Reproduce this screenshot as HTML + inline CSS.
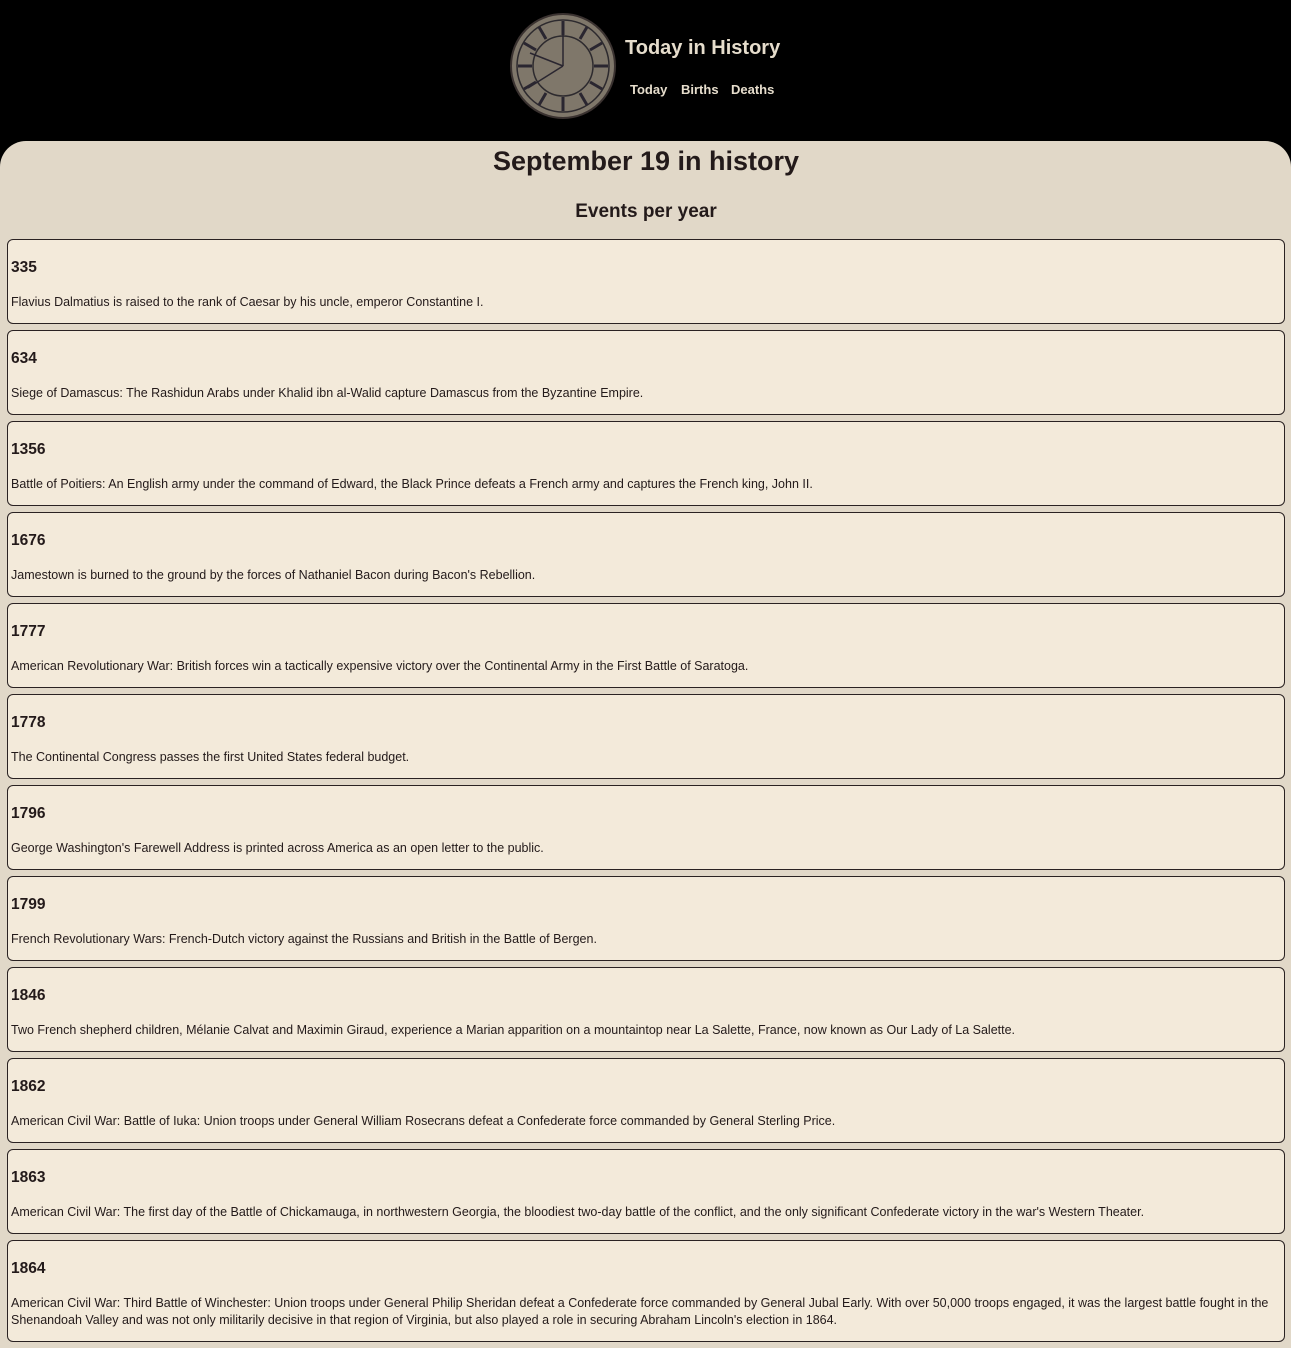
<!DOCTYPE html>
<html><head><meta charset="utf-8"><style>
*{box-sizing:border-box}
body{margin:0;background:#000;font-family:"Liberation Sans",sans-serif;color:#231a1a;width:1291px;height:1348px;overflow:hidden}
header{height:141px;position:relative}
.clock{position:absolute;left:510px;top:13px;width:106px;height:106px}
.ttl{position:absolute;left:625px;top:37px;font-size:20px;font-weight:bold;color:#e6ddcc;white-space:nowrap}
.nav{position:absolute;top:82px;font-size:13px;font-weight:bold;color:#e6ddcc}
main{background:#e1d8c8;border-radius:26px 26px 0 0;height:1207px;padding:0 6px 0 7px}
h1{margin:0;text-align:center;font-size:27px;line-height:40px;padding-top:0}
h2{margin:0;text-align:center;font-size:19px;line-height:24px;margin-top:19px;margin-bottom:15px}
.c{background:#f3eada;border:1px solid #2a2222;border-radius:6px;padding:0 3px;margin-bottom:6px}
.c h3{margin:19px 0 0;font-size:15.5px;line-height:18px}
.c p{margin:17px 0 12px;font-size:12.5px;line-height:17px}
</style></head><body>
<header>
<svg class="clock" viewBox="0 0 106 106">
<circle cx="53" cy="53" r="52" fill="#7f776a" stroke="#3a3230" stroke-width="2"/>
<circle cx="53" cy="53" r="46" fill="none" stroke="#2d2a2e" stroke-width="1.5"/>
<circle cx="53" cy="53" r="30" fill="none" stroke="#2d2a2e" stroke-width="1.5"/>
<g stroke="#2a2630" stroke-width="3">
<line x1="53" y1="8" x2="53" y2="22"/><line x1="53" y1="84" x2="53" y2="98"/>
<line x1="8" y1="53" x2="22" y2="53"/><line x1="84" y1="53" x2="98" y2="53"/>
<line x1="77" y1="14" x2="70" y2="26"/><line x1="92" y1="30" x2="80" y2="37"/>
<line x1="92" y1="76" x2="80" y2="69"/><line x1="77" y1="92" x2="70" y2="80"/>
<line x1="29" y1="92" x2="36" y2="80"/><line x1="14" y1="76" x2="26" y2="69"/>
<line x1="14" y1="30" x2="26" y2="37"/><line x1="29" y1="14" x2="36" y2="26"/>
</g>
<g stroke="#2a2630" stroke-width="1.5"><line x1="53" y1="53" x2="20" y2="40"/><line x1="53" y1="53" x2="18" y2="75"/><line x1="53" y1="53" x2="53" y2="10"/></g>
</svg>
<div class="ttl">Today in History</div>
<div class="nav" style="left:630px">Today</div>
<div class="nav" style="left:681px">Births</div>
<div class="nav" style="left:731px">Deaths</div>
</header>
<main>
<h1>September 19 in history</h1>
<h2>Events per year</h2>
<div class="c"><h3>335</h3><p>Flavius Dalmatius is raised to the rank of Caesar by his uncle, emperor Constantine I.</p></div>
<div class="c"><h3>634</h3><p>Siege of Damascus: The Rashidun Arabs under Khalid ibn al-Walid capture Damascus from the Byzantine Empire.</p></div>
<div class="c"><h3>1356</h3><p>Battle of Poitiers: An English army under the command of Edward, the Black Prince defeats a French army and captures the French king, John II.</p></div>
<div class="c"><h3>1676</h3><p>Jamestown is burned to the ground by the forces of Nathaniel Bacon during Bacon's Rebellion.</p></div>
<div class="c"><h3>1777</h3><p>American Revolutionary War: British forces win a tactically expensive victory over the Continental Army in the First Battle of Saratoga.</p></div>
<div class="c"><h3>1778</h3><p>The Continental Congress passes the first United States federal budget.</p></div>
<div class="c"><h3>1796</h3><p>George Washington's Farewell Address is printed across America as an open letter to the public.</p></div>
<div class="c"><h3>1799</h3><p>French Revolutionary Wars: French-Dutch victory against the Russians and British in the Battle of Bergen.</p></div>
<div class="c"><h3>1846</h3><p>Two French shepherd children, Mélanie Calvat and Maximin Giraud, experience a Marian apparition on a mountaintop near La Salette, France, now known as Our Lady of La Salette.</p></div>
<div class="c"><h3>1862</h3><p>American Civil War: Battle of Iuka: Union troops under General William Rosecrans defeat a Confederate force commanded by General Sterling Price.</p></div>
<div class="c"><h3>1863</h3><p>American Civil War: The first day of the Battle of Chickamauga, in northwestern Georgia, the bloodiest two-day battle of the conflict, and the only significant Confederate victory in the war's Western Theater.</p></div>
<div class="c"><h3>1864</h3><p style="margin-top:17px;margin-bottom:12px">American Civil War: Third Battle of Winchester: Union troops under General Philip Sheridan defeat a Confederate force commanded by General Jubal Early. With over 50,000 troops engaged, it was the largest battle fought in the Shenandoah Valley and was not only militarily decisive in that region of Virginia, but also played a role in securing Abraham Lincoln's election in 1864.</p></div>
</main>
</body></html>
